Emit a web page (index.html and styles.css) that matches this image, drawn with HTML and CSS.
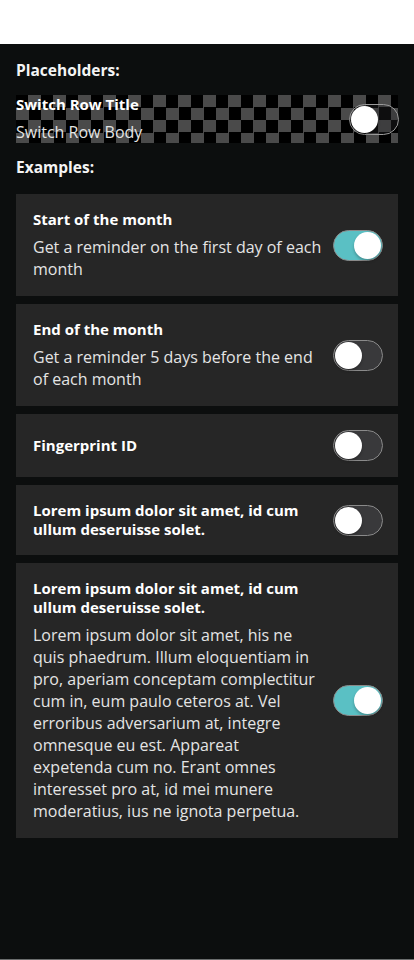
FILE: index.html
```html
<!DOCTYPE html>
<html lang="en">
<head>
<meta charset="utf-8">
<title>Switch Rows</title>
<link rel="stylesheet" href="styles.css">
</head>
<body>
<div class="app">
  <header class="topbar"></header>
  <main class="content">
    <h2 class="section-title">Placeholders:</h2>
    <div class="placeholder-row">
      <div class="text">
        <div class="title">Switch Row Title</div>
        <div class="body">Switch Row Body</div>
      </div>
      <span class="switch switch-ghost"><span class="knob"></span></span>
    </div>

    <h2 class="section-title examples">Examples:</h2>
    <div class="cards">
      <div class="card">
        <div class="text">
          <div class="title">Start of the month</div>
          <div class="body">Get a reminder on the first day of each month</div>
        </div>
        <span class="switch on"><span class="knob"></span></span>
      </div>
      <div class="card">
        <div class="text">
          <div class="title">End of the month</div>
          <div class="body">Get a reminder 5 days before the end of each month</div>
        </div>
        <span class="switch"><span class="knob"></span></span>
      </div>
      <div class="card">
        <div class="text">
          <div class="title">Fingerprint ID</div>
        </div>
        <span class="switch"><span class="knob"></span></span>
      </div>
      <div class="card">
        <div class="text">
          <div class="title">Lorem ipsum dolor sit amet, id cum ullum deseruisse solet.</div>
        </div>
        <span class="switch"><span class="knob"></span></span>
      </div>
      <div class="card">
        <div class="text">
          <div class="title">Lorem ipsum dolor sit amet, id cum ullum deseruisse solet.</div>
          <div class="body body-long">Lorem ipsum dolor sit amet, his ne quis phaedrum. Illum eloquentiam in pro, aperiam conceptam complectitur cum in, eum paulo ceteros at. Vel erroribus adversarium at, integre omnesque eu est. Appareat expetenda cum no. Erant omnes interesset pro at, id mei munere moderatius, ius ne ignota perpetua.</div>
        </div>
        <span class="switch on"><span class="knob"></span></span>
      </div>
    </div>
  </main>
</div>
</body>
</html>
```

FILE: styles.css
```css
* { box-sizing: border-box; }

html, body {
  margin: 0;
  padding: 0;
  background: #0c0e0e;
}

body {
  font-family: "Open Sans", "Noto Sans", sans-serif;
  color: #ffffff;
}

.app {
  min-height: 960px;
  display: flex;
  flex-direction: column;
  border-bottom: 1px solid #6b6d6d;
}

.topbar {
  height: 44px;
  background: #ffffff;
}

.content {
  padding: 16px 16px 0;
}

.section-title {
  margin: 0;
  font-size: 15.5px;
  line-height: 20px;
  font-weight: 700;
  color: #f4f4f4;
}

.examples {
  margin-top: 14px;
  margin-bottom: 17px;
}

.placeholder-row {
  margin-top: 15px;
  height: 48px;
  display: flex;
  align-items: center;
  gap: 8px;
  background-color: #000;
  background-image: conic-gradient(#4a4a4a 0 25%, #000 0 50%, #4a4a4a 0 75%, #000 0);
  background-size: 25px 25px;
  background-position: 0 0;
}

.placeholder-row .switch {
  margin-right: -1px;
}

.text {
  flex: 1;
  min-width: 0;
  display: flex;
  flex-direction: column;
  gap: 7px;
}

.title {
  font-size: 15px;
  line-height: 19px;
  font-weight: 700;
  color: #ffffff;
}

.body {
  font-size: 16px;
  line-height: 22px;
  color: #e4e4e4;
}

.body-long {
  max-width: 287px;
}

.cards {
  display: flex;
  flex-direction: column;
  gap: 8px;
}

.card {
  background: #262626;
  padding: 16px 15px 16px 17px;
  display: flex;
  align-items: center;
  gap: 10px;
}

.switch {
  flex: none;
  width: 50px;
  height: 31px;
  border-radius: 16px;
  border: 1px solid #8a8a8a;
  background: #39393b;
  position: relative;
  display: block;
}

.switch .knob {
  position: absolute;
  top: 1px;
  left: 1px;
  width: 27px;
  height: 27px;
  border-radius: 50%;
  background: #ffffff;
  box-shadow: 0 2px 3px rgba(0, 0, 0, 0.25);
}

.switch.on {
  background: #5ac0c4;
}

.switch.on .knob {
  left: auto;
  right: 1px;
}

.switch-ghost {
  background: rgba(40, 40, 42, 0.35);
  border-color: #9a9a9a;
}
```
